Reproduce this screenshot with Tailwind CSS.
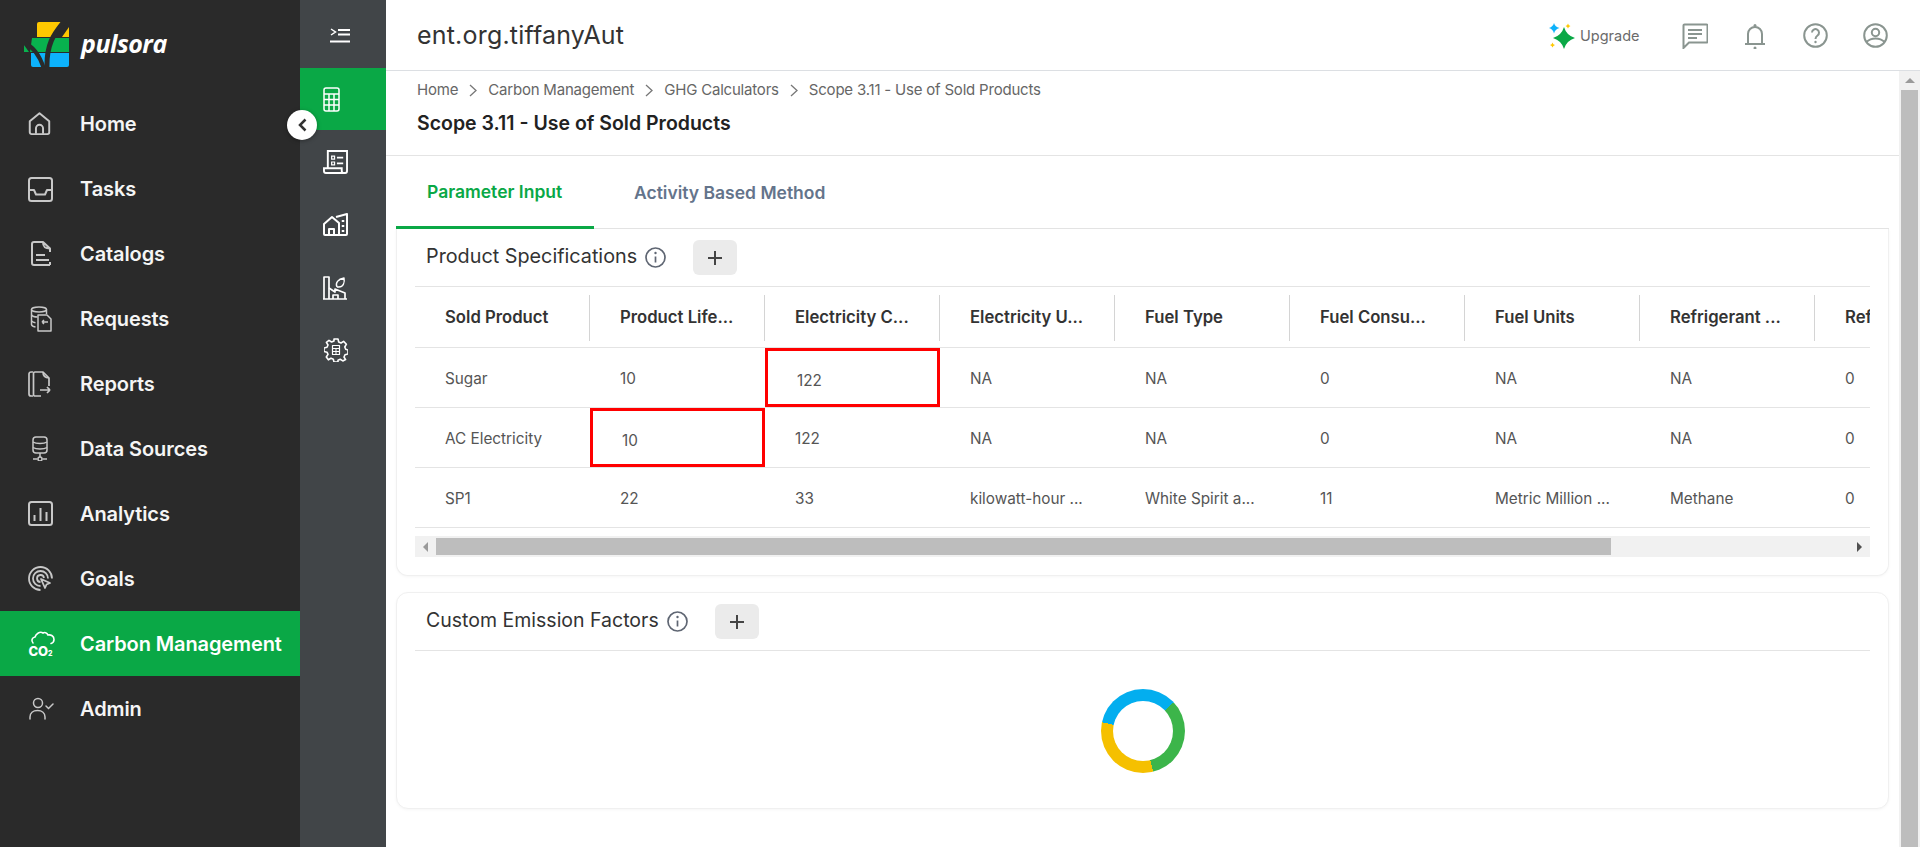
<!DOCTYPE html>
<html lang="en">
<head>
<meta charset="UTF-8">
<title>Pulsora</title>
<script src="https://cdn.jsdelivr.net/npm/@tailwindcss/browser@4"></script>
</head>
<body class="w-[1920px] h-[847px] overflow-hidden bg-white font-['Inter','Noto_Sans',sans-serif]">
<div class="flex h-full relative">

  <!-- main sidebar -->
  <aside class="w-[300px] shrink-0 bg-[#2a2a2a] text-[#f5f5f5]">
    <div class="h-[91px] flex items-start pt-[22px] pl-[24px]">
      <svg width="46" height="46" viewBox="0 0 46 46">
        <path d="M15 0h23L31 15H13V2a2 2 0 0 1 2-2z" fill="#ffc800"/>
        <path d="M38 15l7-10v10z" fill="#ffc800"/>
        <path d="M8 16h37v14H6z" fill="#08b24e"/>
        <path d="M0 23l5 7H0z" fill="#08b24e"/>
        <path d="M7 31h38v12a2 2 0 0 1-2 2H9a2 2 0 0 1-2-2z" fill="#0db2fb"/>
        <path d="M-1 20C9 24 16 34 20 47" fill="none" stroke="#2a2a2a" stroke-width="4"/>
        <path d="M42 -3C33 9 22 18 23 47" fill="none" stroke="#2a2a2a" stroke-width="5"/>
      </svg>
      <span class="ml-[11px] mt-[5px] text-[25px] leading-[32px] font-bold italic font-['Open_Sans',sans-serif] text-white tracking-[-0.5px]">pulsora</span>
    </div>
    <nav class="text-[20px] font-semibold tracking-[-0.1px]">
      <a class="h-[65px] flex items-center">
        <span class="w-[80px] pl-[28px]"><svg class="w-[23px] h-[25px]" viewBox="0 0 26 27" fill="none" stroke="#c8c8c8" stroke-width="2.200" stroke-linejoin="round"><path d="M2 11 13 2l11 9v12.500a2 2 0 0 1-2 2H4a2 2 0 0 1-2-2z"/><path d="M9 25v-6a4 4 0 0 1 8 0v6"/></svg></span>Home</a>
      <a class="h-[65px] flex items-center">
        <span class="w-[80px] pl-[27px]"><svg class="w-[26px] h-[26px]" viewBox="0 0 26 26" fill="none" stroke="#c8c8c8" stroke-width="2" stroke-linejoin="round"><rect x="2" y="2" width="23" height="23" rx="2.500"/><path d="M2 14h5l2 4.500h9l2-4.500h5"/></svg></span>Tasks</a>
      <a class="h-[65px] flex items-center">
        <span class="w-[80px] pl-[30px]"><svg class="w-[22px] h-[27px]" viewBox="0 0 22 27" fill="none" stroke="#c8c8c8" stroke-width="2" stroke-linejoin="round"><path d="M13 2H4a2 2 0 0 0-2 2v19a2 2 0 0 0 2 2h16"/><path d="M13 2c0 5 2 6.500 7 6.500L13 2z"/><path d="M6 15h9M6 20h13"/><path d="M20 8.500V12M20 22v3"/></svg></span>Catalogs</a>
      <a class="h-[65px] flex items-center">
        <span class="w-[80px] pl-[30px]"><svg class="w-[22px] h-[26px]" viewBox="0 0 22 26" fill="none" stroke="#c8c8c8" stroke-width="1.500" stroke-linejoin="round"><ellipse cx="9" cy="3.500" rx="7.500" ry="2.500"/><path d="M1.500 3.500v15c0 1 1.500 2 4 2.500M16.500 3.500V8"/><path d="M1.500 9c1 1.500 3.500 2 6 2M1.500 15c1 1 2 1.500 4 1.800"/><path d="M8 9h9l4 4v12H8z"/><path d="M18 16h-6m0 0 2-2m-2 2 2 2"/></svg></span>Requests</a>
      <a class="h-[65px] flex items-center">
        <span class="w-[80px] pl-[28px]"><svg class="w-[24px] h-[26px]" viewBox="0 0 24 26" fill="none" stroke="#c8c8c8" stroke-width="1.700" stroke-linejoin="round"><path d="M5 1H3a2 2 0 0 0-2 2v20a2 2 0 0 0 2 2h2"/><path d="M21 15V7l-6-6H7a1.500 1.500 0 0 0-1.500 1.500v21A1.500 1.500 0 0 0 7 25h6"/><path d="M15 1c0 4 2 6 6 6"/><path d="M12 19h10m0 0-3-3m3 3-3 3"/></svg></span>Reports</a>
      <a class="h-[65px] flex items-center">
        <span class="w-[80px] pl-[32px]"><svg class="w-[16px] h-[25px]" viewBox="0 0 16 25" fill="none" stroke="#c8c8c8" stroke-width="1.500"><rect x="1" y="1" width="14" height="16" rx="3"/><path d="M1 6c3 2 11 2 14 0M1 11.500c3 2 11 2 14 0"/><path d="M8 17v4M1 23h4.500M10.500 23H15"/><circle cx="8" cy="23" r="2"/></svg></span>Data Sources</a>
      <a class="h-[65px] flex items-center">
        <span class="w-[80px] pl-[28px]"><svg class="w-[25px] h-[25px]" viewBox="0 0 25 25" fill="none" stroke="#c8c8c8" stroke-width="2"><rect x="1" y="1" width="23" height="23" rx="2.500"/><path d="M6.500 20v-6M12.500 20V7M18.500 20V11"/></svg></span>Analytics</a>
      <a class="h-[65px] flex items-center">
        <span class="w-[80px] pl-[28px]"><svg class="w-[25px] h-[25px]" viewBox="0 0 25 25" fill="none" stroke="#c8c8c8" stroke-width="1.800"><path d="M24 12.500A11.500 11.500 0 1 0 12.500 24"/><path d="M20 12.500a7.500 7.500 0 1 0-7.500 7.500"/><path d="M16 12a3.500 3.500 0 1 0-3.500 4"/><path d="M13 13l4 9 1.500-3.500L22 17z" stroke-linejoin="round"/></svg></span>Goals</a>
      <a class="h-[65px] flex items-center bg-[#0aa846] text-white">
        <span class="w-[80px] pl-[29px]"><svg class="w-[26px] h-[25px] overflow-visible" viewBox="0 0 26 25" fill="none" stroke="#fff" stroke-width="1.600"><path d="M4 12a3.500 3.500 0 0 1 2-6C7 2.500 11 0 14 2c1.500-1 4-.5 5 2 3-.5 6 1 6 4.500 0 2.500-1.500 3.500-3 4" stroke-linecap="round"/><text x="-.5" y="24.500" fill="#fff" stroke="none" font-size="13" font-weight="800" font-family="Inter, sans-serif">CO</text><text x="19" y="24.500" fill="#fff" stroke="none" font-size="7" font-weight="800" font-family="Inter, sans-serif">2</text></svg></span>Carbon Management</a>
      <a class="h-[65px] flex items-center">
        <span class="w-[80px] pl-[29px]"><svg class="w-[25px] h-[23px]" viewBox="0 0 25 23" fill="none" stroke="#c8c8c8" stroke-width="1.500" stroke-linecap="round"><circle cx="9" cy="6" r="4.500"/><path d="M1 22v-2c0-4 3-6.500 7.500-6.500S16 16 16 20v2"/><path d="M17 9l2.500 2.500L24 7"/></svg></span>Admin</a>
    </nav>
  </aside>

  <!-- secondary rail -->
  <aside class="w-[86px] shrink-0 bg-[#414548] flex flex-col">
    <div class="h-[68px] flex items-center justify-center pr-[6px] pt-[2px]">
      <svg width="20" height="15" viewBox="0 0 20 15" fill="none" stroke="#fff" stroke-width="2.200"><path d="M1 1l4.500 3L1 7" stroke-width="1.500"/><path d="M8 2h12M8 6.500h12M0 13.500h20"/></svg>
    </div>
    <div class="h-[62px] bg-[#0aa846] flex items-center pl-[23px]">
      <svg width="17" height="25" viewBox="0 0 17 25" fill="none" stroke="#fff" stroke-width="1.500"><rect x="1" y="1" width="15" height="23" rx="2"/><path d="M1 7h15M1 12.500h15M1 18h15M6 7v17M11 7v17"/></svg>
    </div>
    <div class="h-[63px] flex items-center pl-[23px]">
      <svg width="25" height="24" viewBox="0 0 26 25" fill="none" stroke="#fff" stroke-width="2"><path d="M5 19V1h20v21a2 2 0 0 1-2 2H3a2 2 0 0 1-2-2v-3h18.500v3a2 2 0 0 0 2 2"/><path d="M9 6.500h3v3H9zM9 12.500h3v3H9z" stroke-width="1.300"/><path d="M14.500 8h6.500M14.500 14h6.500" stroke-width="1.700"/></svg>
    </div>
    <div class="h-[63px] flex items-center pl-[23px]">
      <svg width="26" height="23" viewBox="0 0 26 23" fill="none" stroke="#fff" stroke-width="2" stroke-linejoin="round"><path d="M1 11l8-7 7 6v12H2a1 1 0 0 1-1-1z"/><path d="M6 22v-6h5v6"/><path d="M13 4l11-3v20a1 1 0 0 1-1 1h-7"/><path d="M20 7v2M20 12v2M20 17v2" stroke-width="2.500"/></svg>
    </div>
    <div class="h-[63px] flex items-center pl-[23px]">
      <svg width="24" height="24" viewBox="0 0 24 24" fill="none" stroke="#fff" stroke-width="1.700" stroke-linejoin="round"><path d="M1 23V1h5v22M0 23h24"/><path d="M6 12l6 4 0-3 10 4v6"/><path d="M10 23v-4h5v4"/><path d="M14 11c-2-4 1-8 7-9 1 5-1 9-5 9l-2 0" stroke-width="1.400"/></svg>
    </div>
    <div class="h-[62px] flex items-center pl-[24px]">
      <svg width="24" height="24" viewBox="0 0 24 24" fill="none" stroke="#fff" stroke-width="1.600" stroke-linejoin="round"><path d="M10 1h4l.7 3 2.300 1 2.600-1.600 2.800 2.800L20.800 9l.9 2.200 2.300.8v4l-3 .7-1 2.300 1.600 2.600-2.800 1.300-2.600-1.600-2.200.9L14 24h-4l-.7-2.800-2.300-1-2.600 1.600L2.300 19 4 16.400l-1-2.200L0 13.500V10l3-.7 1-2.300-1.600-2.600L5 2.300 7.600 4 10 3z"/><rect x="8.500" y="7.500" width="7" height="9" stroke-width="1.200"/><path d="M8.500 10.500h7M8.500 13.500h7M12 10.500v6" stroke-width="1"/></svg>
    </div>
  </aside>

  <!-- main column -->
  <div class="flex-1 min-w-0 flex flex-col">
    <header class="h-[71px] shrink-0 border-b border-[#dcdfe3] flex items-center pl-[31px] pt-[2px] text-[#333]">
      <span class="text-[25px] font-normal tracking-[0.2px]">ent.org.tiffanyAut</span>
      <div class="ml-auto flex items-center">
        <svg width="28" height="27" viewBox="0 0 28 27"><path d="M15 4Q17.500 12.500 26 15 17.500 17.500 15 26 12.500 17.500 4 15 12.500 12.500 15 4z" fill="#0aa846"/><path d="M5 0Q6 4 10.500 5 6 6 5 10.500 4 6-.5 5 4 4 5 0z" fill="#0db2fb"/><path d="M19 .5Q19.500 2.500 21.500 3 19.500 3.500 19 5.500 18.500 3.500 16.500 3 18.500 2.500 19 .5zM3.500 19.500Q4 21.500 6 22 4 22.500 3.500 24.500 3 22.500 1 22 3 21.500 3.500 19.500z" fill="#ffc800"/></svg>
        <span class="ml-[3px] w-[70px] text-[14.500px] text-[#6b6b6b]">Upgrade</span>
        <svg class="ml-[32px]" width="26" height="26" viewBox="0 0 26 26" fill="none" stroke="#8a9590" stroke-width="2"><path d="M1.500 25V2.500a1 1 0 0 1 1-1h22a1 1 0 0 1 1 1v16a1 1 0 0 1-1 1H7z"/><path d="M6 7h14M6 11h14M6 15h9"/></svg>
        <svg class="ml-[37px]" width="20" height="26" viewBox="0 0 20 26" fill="none" stroke="#8a9590" stroke-width="2"><path d="M3 20v-9a7 7 0 0 1 14 0v9M0 21h20"/><circle cx="10" cy="2.500" r="1.500" fill="#8a9590" stroke="none"/><circle cx="10" cy="25" r="1.500" fill="#8a9590" stroke="none"/></svg>
        <svg class="ml-[38px] -mt-[2px]" width="25" height="25" viewBox="0 0 25 25" fill="none" stroke="#8a9590" stroke-width="2"><circle cx="12.500" cy="12.500" r="11.300"/><path d="M9 9.500a3.500 3.500 0 1 1 5.500 3c-1.500 1-2 1.500-2 3.500"/><circle cx="12.500" cy="19" r="1.200" fill="#8a9590" stroke="none"/></svg>
        <svg class="ml-[35px] mr-[32px] -mt-[2px]" width="25" height="25" viewBox="0 0 25 25" fill="none" stroke="#8a9590" stroke-width="2"><circle cx="12.500" cy="12.500" r="11.300"/><circle cx="12.500" cy="9.500" r="3.700"/><path d="M3.500 19c3-3 6-3.500 9-3.500s6 .5 9 3.500"/></svg>
      </div>
    </header>

    <div class="flex-1 min-h-0 flex">
      <div class="flex-1 min-w-0">
        <!-- page title -->
        <div class="h-[85px] border-b border-[#e4e4e4] pl-[31px] pt-[8px]">
          <div class="flex items-center h-[22px] text-[15px] tracking-[-0.2px] text-[#666]">
            <span>Home</span>
            <svg class="mx-[11px]" width="8" height="13" viewBox="0 0 8 13" fill="none" stroke="#777" stroke-width="1.300"><path d="M1 1l6 5.500L1 12"/></svg>
            <span>Carbon Management</span>
            <svg class="mx-[11px]" width="8" height="13" viewBox="0 0 8 13" fill="none" stroke="#777" stroke-width="1.300"><path d="M1 1l6 5.500L1 12"/></svg>
            <span>GHG Calculators</span>
            <svg class="mx-[11px]" width="8" height="13" viewBox="0 0 8 13" fill="none" stroke="#777" stroke-width="1.300"><path d="M1 1l6 5.500L1 12"/></svg>
            <span>Scope 3.11 - Use of Sold Products</span>
          </div>
          <h1 class="mt-[9px] text-[19.500px] leading-[26px] font-semibold text-[#222]">Scope 3.11 - Use of Sold Products</h1>
        </div>

        <!-- tabs -->
        <div class="h-[73px] mx-[10px] border-b border-[#e4e4e4] flex text-[17.500px] font-semibold">
          <div class="w-[198px] h-[73px] border-b-[3px] border-[#0aa846] text-[#0aa846] flex items-center pl-[31px] pt-[2px]">Parameter Input</div>
          <div class="ml-[40px] flex items-center text-[#64748b] pt-[2px]">Activity Based Method</div>
        </div>

        <!-- product specifications card -->
        <section class="ml-[10px] w-[1493px] h-[347px] bg-white rounded-b-[12px] border border-t-0 border-[#f0f0f0] shadow-[0_1px_3px_rgba(0,0,0,0.04)] px-[18px]">
          <div class="h-[58px] flex items-center border-b border-[#e4e4e4]">
            <span class="ml-[11px] -mt-[2px] text-[19.800px] text-[#333]">Product Specifications</span>
            <svg class="ml-[8px]" width="21" height="21" viewBox="0 0 21 21" fill="none" stroke="#5f6673" stroke-width="1.700"><circle cx="10.500" cy="10.500" r="9.500"/><path d="M10.500 9.500v6"/><circle cx="10.500" cy="6" r="1.200" fill="#5f6673" stroke="none"/></svg>
            <button class="ml-[27px] w-[44px] h-[35px] rounded-[6px] bg-[#ebebeb] flex items-center justify-center"><svg width="14" height="14" viewBox="0 0 14 14" stroke="#444" stroke-width="2"><path d="M7 0v14M0 7h14"/></svg></button>
          </div>
          <div class="w-[1455px] overflow-hidden">
            <div class="w-[1600px] grid grid-cols-[175px_repeat(8,175px)] text-[16.700px] font-semibold text-[#333] h-[61px] items-center border-b border-[#e4e4e4] pt-[2px]">
              <div class="h-[46px] flex items-center pl-[30px] border-r border-[#d4d4d4]">Sold Product</div>
              <div class="h-[46px] flex items-center pl-[30px] border-r border-[#d4d4d4]">Product Life...</div>
              <div class="h-[46px] flex items-center pl-[30px] border-r border-[#d4d4d4]">Electricity C...</div>
              <div class="h-[46px] flex items-center pl-[30px] border-r border-[#d4d4d4]">Electricity U...</div>
              <div class="h-[46px] flex items-center pl-[30px] border-r border-[#d4d4d4]">Fuel Type</div>
              <div class="h-[46px] flex items-center pl-[30px] border-r border-[#d4d4d4]">Fuel Consu...</div>
              <div class="h-[46px] flex items-center pl-[30px] border-r border-[#d4d4d4]">Fuel Units</div>
              <div class="h-[46px] flex items-center pl-[30px] border-r border-[#d4d4d4]">Refrigerant ...</div>
              <div class="h-[46px] flex items-center pl-[30px]">Refrigerant</div>
            </div>
            <div class="w-[1600px] grid grid-cols-[175px_repeat(8,175px)] text-[15.300px] text-[#555] h-[60px] items-center border-b border-[#e4e4e4]">
              <div class="pl-[30px] pt-[4px]">Sugar</div>
              <div class="pl-[30px] pt-[4px]">10</div>
              <div class="h-[59px] flex items-center pl-[29px] pt-[8px] border-[3px] border-[#ff0000]">122</div>
              <div class="pl-[30px] pt-[4px]">NA</div>
              <div class="pl-[30px] pt-[4px]">NA</div>
              <div class="pl-[30px] pt-[4px]">0</div>
              <div class="pl-[30px] pt-[4px]">NA</div>
              <div class="pl-[30px] pt-[4px]">NA</div>
              <div class="pl-[30px] pt-[4px]">0</div>
            </div>
            <div class="w-[1600px] grid grid-cols-[175px_repeat(8,175px)] text-[15.300px] text-[#555] h-[60px] items-center border-b border-[#e4e4e4]">
              <div class="pl-[30px] pt-[4px]">AC Electricity</div>
              <div class="h-[59px] flex items-center pl-[29px] pt-[8px] border-[3px] border-[#ff0000]">10</div>
              <div class="pl-[30px] pt-[4px]">122</div>
              <div class="pl-[30px] pt-[4px]">NA</div>
              <div class="pl-[30px] pt-[4px]">NA</div>
              <div class="pl-[30px] pt-[4px]">0</div>
              <div class="pl-[30px] pt-[4px]">NA</div>
              <div class="pl-[30px] pt-[4px]">NA</div>
              <div class="pl-[30px] pt-[4px]">0</div>
            </div>
            <div class="w-[1600px] grid grid-cols-[175px_repeat(8,175px)] text-[15.300px] text-[#555] h-[60px] items-center border-b border-[#e4e4e4]">
              <div class="pl-[30px] pt-[4px]">SP1</div>
              <div class="pl-[30px] pt-[4px]">22</div>
              <div class="pl-[30px] pt-[4px]">33</div>
              <div class="pl-[30px] pt-[4px]">kilowatt-hour ...</div>
              <div class="pl-[30px] pt-[4px]">White Spirit a...</div>
              <div class="pl-[30px] pt-[4px]">11</div>
              <div class="pl-[30px] pt-[4px]">Metric Million ...</div>
              <div class="pl-[30px] pt-[4px]">Methane</div>
              <div class="pl-[30px] pt-[4px]">0</div>
            </div>
            <!-- horizontal scrollbar -->
            <div class="mt-[8px] h-[21px] bg-[#f1f1f1] flex items-center">
              <span class="w-[21px] flex justify-center"><span class="border-y-[5px] border-y-transparent border-r-[5px] border-r-[#9a9a9a]"></span></span>
              <span class="w-[1175px] h-[17px] bg-[#bdbdbd]"></span>
              <span class="ml-auto w-[21px] flex justify-center"><span class="border-y-[5px] border-y-transparent border-l-[5px] border-l-[#505050]"></span></span>
            </div>
          </div>
        </section>

        <!-- custom emission factors card -->
        <section class="mt-[16px] ml-[10px] w-[1493px] h-[217px] bg-white rounded-[12px] border border-[#f0f0f0] shadow-[0_1px_3px_rgba(0,0,0,0.04)] px-[18px]">
          <div class="h-[58px] flex items-center border-b border-[#e4e4e4]">
            <span class="ml-[11px] -mt-[2px] text-[19.500px] text-[#333]">Custom Emission Factors</span>
            <svg class="ml-[8px]" width="21" height="21" viewBox="0 0 21 21" fill="none" stroke="#5f6673" stroke-width="1.700"><circle cx="10.500" cy="10.500" r="9.500"/><path d="M10.500 9.500v6"/><circle cx="10.500" cy="6" r="1.200" fill="#5f6673" stroke="none"/></svg>
            <button class="ml-[27px] w-[44px] h-[35px] rounded-[6px] bg-[#ebebeb] flex items-center justify-center"><svg width="14" height="14" viewBox="0 0 14 14" stroke="#444" stroke-width="2"><path d="M7 0v14M0 7h14"/></svg></button>
          </div>
          <div class="flex justify-center pt-[38px]">
            <div class="w-[84px] h-[84px] rounded-full bg-[conic-gradient(#03aeef_0deg_47deg,#3cb54a_47deg_166deg,#f5c000_166deg_282deg,#03aeef_282deg_360deg)] flex items-center justify-center">
              <div class="w-[60px] h-[60px] rounded-full bg-white"></div>
            </div>
          </div>
        </section>
      </div>

      <!-- page scrollbar -->
      <div class="w-[21px] shrink-0 bg-[#f1f1f1] flex flex-col">
        <span class="h-[19px] flex items-center justify-center"><span class="border-x-[5px] border-x-transparent border-b-[5px] border-b-[#9a9a9a]"></span></span>
        <span class="flex-1 w-[17px] mx-auto bg-[#bdbdbd]"></span>
      </div>
    </div>
  </div>

  <!-- collapse toggle, sits over both rails -->
  <button class="absolute left-[287px] top-[110px] w-[30px] h-[30px] rounded-full bg-white shadow-[0_1px_4px_rgba(0,0,0,0.35)] flex items-center justify-center">
    <svg width="9" height="14" viewBox="0 0 9 14" fill="none" stroke="#333" stroke-width="2.500"><path d="M7.500 1.500 2 7l5.500 5.500"/></svg>
  </button>
</div>
</body>
</html>
